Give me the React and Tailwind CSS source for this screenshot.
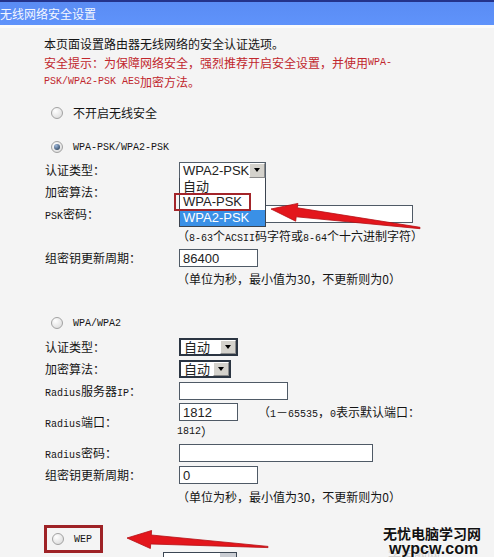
import React from 'react';

// ASCII inside the Chinese text is set in a small monospaced face, like SimSun's bitmap glyphs
function A({ children }) {
  return <span className="font-['Liberation_Mono',monospace] text-[10px] leading-none">{children}</span>;
}

function Radio({ checked }) {
  return (
    <span className="flex h-[12px] w-[12px] shrink-0 items-center justify-center rounded-full border border-[#a2a2a2] bg-[radial-gradient(circle_at_35%_30%,#ffffff,#d6d6d6)]">
      {checked && (
        <span className="h-[6px] w-[6px] rounded-full bg-[radial-gradient(circle_at_35%_30%,#9db8dc,#1c3149)]" />
      )}
    </span>
  );
}

function RadioRow({ checked, children, className = '' }) {
  return (
    <div className={`flex h-[18px] items-center gap-[10px] pl-[51px] ${className}`}>
      <Radio checked={checked} />
      <span className="font-['Liberation_Mono',monospace] text-[10px]">{children}</span>
    </div>
  );
}

function Select({ value, className = '', thick }) {
  return (
    <div
      className={`flex bg-white ${thick ? 'h-[18px] border-2 border-[#2b3542]' : 'h-[17px] border border-[#55606c]'} ${className}`}
    >
      <span className="flex flex-1 items-center overflow-hidden whitespace-nowrap pl-[3px] text-[13px] leading-none text-[#222] font-['Liberation_Sans','Noto_Sans_CJK_SC',sans-serif]">
        {value}
      </span>
      <span className="flex w-[16px] items-center justify-center border border-t-white border-l-white border-b-[#8a8a8a] border-r-[#8a8a8a] bg-[#d4d2cc]">
        <span className="h-0 w-0 border-x-[3.5px] border-t-[4px] border-x-transparent border-t-black" />
      </span>
    </div>
  );
}

function Field({ value = '', className = '' }) {
  return (
    <input
      readOnly
      value={value}
      className={`h-[18px] border border-[#4f5a66] bg-white pl-[3px] text-[13px] leading-none text-[#222] outline-none font-['Liberation_Sans',sans-serif] ${className}`}
    />
  );
}

function Row({ label, children, className = 'h-[22px]' }) {
  return (
    <div className={`flex items-center pl-[45px] ${className}`}>
      <div className="w-[134px] shrink-0 whitespace-nowrap">{label}</div>
      <div className="flex-1">{children}</div>
    </div>
  );
}

function Line({ children }) {
  return <div className="flex h-[19px] items-center whitespace-nowrap">{children}</div>;
}

function Arrows() {
  return (
    <svg className="pointer-events-none absolute left-0 top-0" width="494" height="557" viewBox="0 0 494 557">
      <polygon
        points="271,209 297.9,203.4 297.4,207.8 420,227.3 420,228.7 296.2,216.8 295.7,221.2"
        fill="#e3161c"
        stroke="#b50f14"
        strokeWidth="0.8"
        strokeLinejoin="round"
      />
      <polygon
        points="127,538 151.6,530.5 151.3,535 268,546.4 268,547.6 150.7,544 150.4,548.5"
        fill="#e3161c"
        stroke="#b50f14"
        strokeWidth="0.8"
        strokeLinejoin="round"
      />
    </svg>
  );
}

export default function App() {
  return (
    <div className="relative h-[557px] w-[494px] overflow-hidden bg-[#f4f4f4] text-[12px] text-[#141414] font-['Noto_Sans_CJK_SC',sans-serif]">
      <div className="flex h-[25px] items-center border-t-2 border-[#24338a] bg-[linear-gradient(#5a8cf4,#5f93fb)] text-[12px] text-[#f4f7ff]">
        无线网络安全设置
      </div>
      <div className="h-[3px] bg-[#fbfbfb]" />

      <div className="mt-[6px] pl-[44px]">
        <Line>本页面设置路由器无线网络的安全认证选项。</Line>
        <div className="text-[#c1272d]">
          <Line>安全提示：为保障网络安全，强烈推荐开启安全设置，并使用<A>WPA-</A></Line>
          <Line><A>PSK/WPA2-PSK AES</A>加密方法。</Line>
        </div>
      </div>

      <RadioRow className="mt-[13px]">
        <span className="font-['Noto_Sans_CJK_SC',sans-serif] text-[12px]">不开启无线安全</span>
      </RadioRow>

      <RadioRow checked className="mt-[16px]">WPA-PSK/WPA2-PSK</RadioRow>

      <div className="mt-[3px]">
        <Row label="认证类型：">
          <Select value="WPA2-PSK" className="w-[87px]" />
        </Row>
        {/* its select is hidden under the open list */}
        <Row label="加密算法：" />
        <Row label={<><A>PSK</A>密码：</>}>
          <Field className="w-[234px]" />
        </Row>
        <Row label="">
          <span className="-ml-[2px]">（<A>8-63</A>个<A>ACSII</A>码字符或<A>8-64</A>个十六进制字符）</span>
        </Row>
        <Row label="组密钥更新周期：">
          <Field value="86400" className="w-[79px]" />
        </Row>
        <Row label="" className="h-[20px]">
          <span className="-ml-[2px]">（单位为秒，最小值为30，不更新则为0）</span>
        </Row>
      </div>

      <RadioRow className="mt-[25px]">WPA/WPA2</RadioRow>

      <div className="mt-[4px]">
        <Row label="认证类型：">
          <Select value="自动" thick className="w-[59px]" />
        </Row>
        <Row label="加密算法：">
          <Select value="自动" thick className="w-[52px]" />
        </Row>
        <Row label={<><A>Radius</A>服务器<A>IP</A>：</>}>
          <Field className="w-[109px]" />
        </Row>
        <Row label={<><A>Radius</A>端口：</>} className="h-[40px]">
          <div className="flex h-[20px] items-center whitespace-nowrap">
            <Field value="1812" className="w-[59px]" />
            <span className="ml-[20px]">（<A>1</A>－<A>65535</A>，<A>0</A>表示默认端口：</span>
          </div>
          <div className="-ml-[2px] flex h-[20px] items-center">
            <A>1812</A>）
          </div>
        </Row>
        <Row label={<><A>Radius</A>密码：</>}>
          <Field className="w-[194px]" />
        </Row>
        <Row label="组密钥更新周期：">
          <Field value="0" className="w-[79px]" />
        </Row>
        <Row label="">
          <span className="-ml-[2px]">（单位为秒，最小值为30，不更新则为0）</span>
        </Row>
      </div>

      <div className="ml-[44px] mt-[17px] flex h-[28px] w-[59px] items-center gap-[10px] border-[3px] border-[#9e2226] pl-[5px]">
        <Radio />
        <span className="font-['Liberation_Mono',monospace] text-[10px]">WEP</span>
      </div>
      <div className="-mt-px ml-[163px] flex h-[18px] w-[74px] border border-[#3b4653] bg-white">
        <span className="flex-1" />
        <span className="w-[16px] bg-[#c9ccd2]" />
      </div>

      {/* open list of the first select */}
      <div className="absolute left-[179px] top-[178px] w-[87px] border border-t-0 border-[#3b4450] bg-white text-[13px] leading-[16px] font-['Liberation_Sans','Noto_Sans_CJK_SC',sans-serif]">
        <div className="h-[16px] pl-[3px] text-[#222] font-['Noto_Sans_CJK_SC',sans-serif]">自动</div>
        <div className="h-[16px] pl-[3px] text-[#222]">WPA-PSK</div>
        <div className="h-[16px] bg-[#3a90e6] pl-[3px] text-white">WPA2-PSK</div>
      </div>
      <div className="absolute left-[174px] top-[193px] h-[18px] w-[77px] border-2 border-[#a3252a]" />

      <Arrows />

      <div className="absolute left-[388px] top-[548px] text-[13px] leading-none text-[#cfcfcf] font-['Liberation_Sans','Noto_Sans_CJK_SC',sans-serif]">
        学电脑网 xuendo.com
      </div>
      <div className="absolute left-[383px] top-[526px] text-[14px] font-bold leading-none text-[#111] [text-shadow:0_0_2px_#fff]">
        无忧电脑学习网
      </div>
      <div className="absolute left-[389px] top-[541px] text-[16px] font-bold leading-none text-[#111] font-['Liberation_Sans',sans-serif] [text-shadow:0_0_2px_#fff]">
        wypcw.com
      </div>
    </div>
  );
}
